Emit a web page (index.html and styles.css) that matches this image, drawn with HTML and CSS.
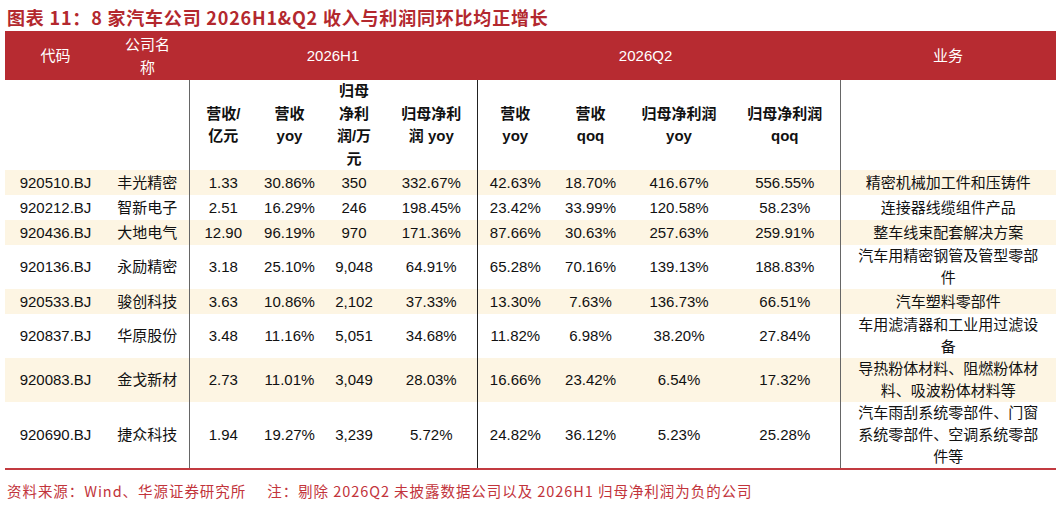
FILE: index.html
```html
<!DOCTYPE html>
<html lang="zh-CN">
<head>
<meta charset="utf-8">
<title>图表 11</title>
<link rel="stylesheet" href="styles.css">
</head>
<body>
<div class="page">
  <div class="title">图表 11：8 家汽车公司 2026H1&amp;Q2 收入与利润同环比均正增长</div>
  <table class="tbl">
    <colgroup>
      <col class="c-code"><col class="c-name">
      <col class="c-h1a"><col class="c-h1b"><col class="c-h1c"><col class="c-h1d">
      <col class="c-q2a"><col class="c-q2b"><col class="c-q2c"><col class="c-q2d">
      <col class="c-biz">
    </colgroup>
    <thead>
      <tr class="head">
        <th>代码</th>
        <th>公司名<br>称</th>
        <th colspan="4" class="h-h1">2026H1</th>
        <th colspan="4" class="h-q2">2026Q2</th>
        <th>业务</th>
      </tr>
      <tr class="sub">
        <th colspan="2" class="sep"></th>
        <th>营收/<br>亿元</th>
        <th>营收<br>yoy</th>
        <th>归母<br>净利<br>润/万<br>元</th>
        <th class="sep-dark">归母净利<br>润 yoy</th>
        <th>营收<br>yoy</th>
        <th>营收<br>qoq</th>
        <th>归母净利润<br>yoy</th>
        <th class="sep">归母净利润<br>qoq</th>
        <th></th>
      </tr>
    </thead>
    <tbody>
      <tr class="alt"><td>920510.BJ</td><td class="sep">丰光精密</td><td>1.33</td><td>30.86%</td><td>350</td><td class="sep-dark">332.67%</td><td>42.63%</td><td>18.70%</td><td>416.67%</td><td class="sep">556.55%</td><td class="biz">精密机械加工件和压铸件</td></tr>
      <tr><td>920212.BJ</td><td class="sep">智新电子</td><td>2.51</td><td>16.29%</td><td>246</td><td class="sep-dark">198.45%</td><td>23.42%</td><td>33.99%</td><td>120.58%</td><td class="sep">58.23%</td><td class="biz">连接器线缆组件产品</td></tr>
      <tr class="alt"><td>920436.BJ</td><td class="sep">大地电气</td><td>12.90</td><td>96.19%</td><td>970</td><td class="sep-dark">171.36%</td><td>87.66%</td><td>30.63%</td><td>257.63%</td><td class="sep">259.91%</td><td class="biz">整车线束配套解决方案</td></tr>
      <tr><td>920136.BJ</td><td class="sep">永励精密</td><td>3.18</td><td>25.10%</td><td>9,048</td><td class="sep-dark">64.91%</td><td>65.28%</td><td>70.16%</td><td>139.13%</td><td class="sep">188.83%</td><td class="biz">汽车用精密钢管及管型零部件</td></tr>
      <tr class="alt"><td>920533.BJ</td><td class="sep">骏创科技</td><td>3.63</td><td>10.86%</td><td>2,102</td><td class="sep-dark">37.33%</td><td>13.30%</td><td>7.63%</td><td>136.73%</td><td class="sep">66.51%</td><td class="biz">汽车塑料零部件</td></tr>
      <tr><td>920837.BJ</td><td class="sep">华原股份</td><td>3.48</td><td>11.16%</td><td>5,051</td><td class="sep-dark">34.68%</td><td>11.82%</td><td>6.98%</td><td>38.20%</td><td class="sep">27.84%</td><td class="biz">车用滤清器和工业用过滤设备</td></tr>
      <tr class="alt"><td>920083.BJ</td><td class="sep">金戈新材</td><td>2.73</td><td>11.01%</td><td>3,049</td><td class="sep-dark">28.03%</td><td>16.66%</td><td>23.42%</td><td>6.54%</td><td class="sep">17.32%</td><td class="biz">导热粉体材料、阻燃粉体材料、吸波粉体材料等</td></tr>
      <tr class="last"><td>920690.BJ</td><td class="sep">捷众科技</td><td>1.94</td><td>19.27%</td><td>3,239</td><td class="sep-dark">5.72%</td><td>24.82%</td><td>36.12%</td><td>5.23%</td><td class="sep">25.28%</td><td class="biz">汽车雨刮系统零部件、门窗系统零部件、空调系统零部件等</td></tr>
    </tbody>
  </table>
  <div class="note">资料来源：Wind、华源证券研究所     注：剔除 2026Q2 未披露数据公司以及 2026H1 归母净利润为负的公司</div>
</div>
</body>
</html>
```

FILE: styles.css
```css
html, body {
  margin: 0;
  padding: 0;
  background: #ffffff;
}

.page {
  padding: 0 5px;
  font-family: "Liberation Sans", "Noto Sans CJK SC", sans-serif;
  color: #111111;
}

.title {
  height: 31px;
  box-sizing: border-box;
  padding: 5px 0 0 2px;
  font-family: "Noto Sans CJK SC", "Liberation Sans", sans-serif;
  font-weight: 700;
  font-size: 18px;
  line-height: 24px;
  letter-spacing: 0.8px;
  color: #b3282e;
  white-space: nowrap;
}

.tbl {
  width: 1051px;
  border-collapse: collapse;
  table-layout: fixed;
  font-size: 15px;
}

.c-code { width: 101px; }
.c-name { width: 83px; }
.c-h1a { width: 68px; }
.c-h1b { width: 65px; }
.c-h1c { width: 64px; }
.c-h1d { width: 91px; }
.c-q2a { width: 76px; }
.c-q2b { width: 75px; }
.c-q2c { width: 102px; }
.c-q2d { width: 110px; }
.c-biz { width: 216px; }

.tbl th, .tbl td {
  padding: 0;
  text-align: center;
  vertical-align: middle;
}

.head {
  height: 49px;
  background: #b72b31;
}

.head th {
  color: #ffffff;
  font-weight: 400;
  font-size: 15px;
  line-height: 23px;
}

.head .h-q2 { padding-right: 26px; }

.sub {
  height: 87px;
}

.sub th {
  font-weight: 700;
  font-size: 15px;
  line-height: 22.6px;
  color: #111111;
}

.tbl tbody tr {
  height: 25px;
}

.tbl tbody td {
  line-height: 22px;
}

.tbl tbody tr.alt {
  background: #fdf5e3;
}

.tbl .sep {
  border-right: 1px solid #666666;
}

.tbl .sep-dark {
  border-right: 1px solid #222222;
}

.tbl td.biz {
  padding: 0 17px;
}

.tbl tr.last td {
  border-bottom: 2px solid #c23a40;
}

.note {
  padding: 11px 0 0 2px;
  font-family: "Noto Sans CJK SC", "Liberation Mono", sans-serif;
  font-size: 14.5px;
  line-height: 20px;
  letter-spacing: 0.95px;
  color: #c2343b;
  white-space: pre;
}
```
